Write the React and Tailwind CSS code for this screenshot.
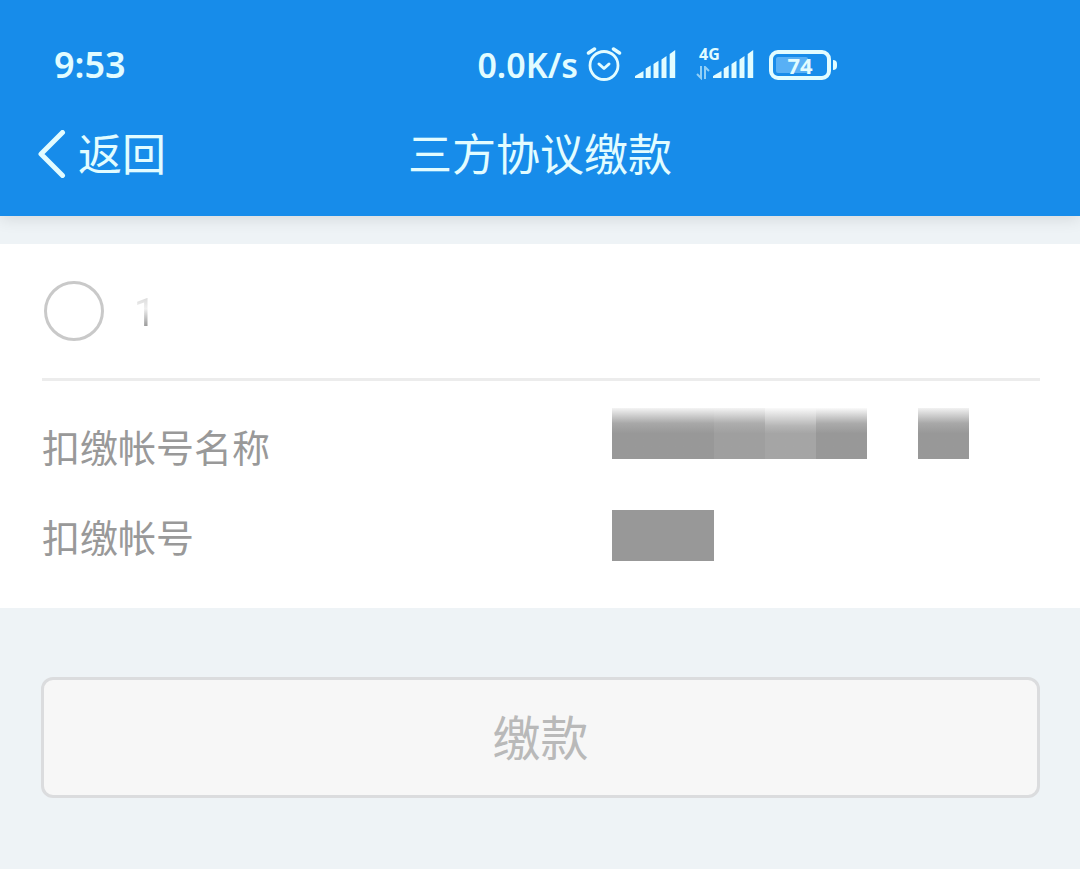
import { useState } from 'react';

// one entry per 51px mosaic cell, null leaves the cell empty
const nameBlocks = [
  'bg-linear-to-b from-[#f4f4f4] via-[#a8a8a8] via-30% to-[#989898] to-50%',
  'bg-linear-to-b from-[#f4f4f4] via-[#a8a8a8] via-30% to-[#989898] to-50%',
  'bg-linear-to-b from-[#f4f4f4] via-[#adadad] via-30% to-[#9f9f9f] to-50%',
  'bg-linear-to-b from-[#fafafa] via-[#b6b6b6] via-35% to-[#a5a5a5] to-50%',
  'bg-linear-to-b from-[#fafafa] via-[#ababab] via-30% to-[#989898] to-50%',
  null,
  'bg-linear-to-b from-[#f2f2f2] via-[#a8a8a8] via-30% to-[#989898] to-50%',
];
const accountBlocks = ['bg-[#989898]', 'bg-[#989898]'];

function AlarmIcon() {
  return (
    <svg width="36" height="36" viewBox="0 0 36 36" fill="none" stroke="currentColor" strokeLinecap="round" aria-hidden="true">
      <circle cx="18" cy="18.500" r="14" strokeWidth="2.8" />
      <path d="M13 17l5 4.500 5-4.500" strokeWidth="3" strokeLinejoin="round" />
      <path d="M2.500 6l6-4M33.500 6l-6-4" strokeWidth="3.5" />
    </svg>
  );
}

function SignalIcon() {
  return (
    <svg width="41" height="30" viewBox="0 0 41 30" fill="currentColor" aria-hidden="true">
      <path d="M0 28v-2l8.500-5v7zM10.700 28v-9.500l5-3V28zM18.500 28V14l5-3.200V28zM26.500 28V9.500l5-3.500v22zM34.700 28V4l5.500-4v28z" />
    </svg>
  );
}

function StatusBar() {
  return (
    <div className="flex items-center justify-between h-[130px] pl-[54px] pr-[243px] font-['Noto_Sans','Noto_Sans_CJK_SC',sans-serif] font-semibold text-[34px] leading-10">
      <span className="text-4xl">9:53</span>
      <div className="flex items-center">
        <span className="mr-2">0.0K/s</span>
        <AlarmIcon />
        <div className="ml-[13px]">
          <SignalIcon />
        </div>
        <div className="relative ml-5 pl-[17px]">
          <span className="absolute left-[3px] -top-1 text-base leading-4 font-bold">4G</span>
          <svg className="absolute left-0 bottom-0 opacity-60" width="14" height="14" viewBox="0 0 14 14" fill="none" stroke="currentColor" strokeWidth="2" aria-hidden="true">
            <path d="M5 0v12L1 8M9 13V1l4 4" />
          </svg>
          <SignalIcon />
        </div>
        <div className="flex items-center ml-[15px]">
          <div className="relative flex items-center justify-center w-[62px] h-[30px] border-4 border-current rounded-[9px] text-[22px] leading-5 font-bold">
            <div className="absolute left-[3px] inset-y-[3px] w-3/5 rounded-xs bg-[#58b0f5]"></div>
            <span className="relative">74</span>
          </div>
          <div className="ml-0.5 w-1 h-2.5 rounded-r-sm bg-current"></div>
        </div>
      </div>
    </div>
  );
}

function Mosaic({ blocks }) {
  return (
    <div className="flex h-[51px]">
      {blocks.map((block, idx) => (
        <div key={idx} className={`w-[51px] ${block || ''}`}></div>
      ))}
    </div>
  );
}

export default function App() {
  const [selected, setSelected] = useState(false);

  return (
    <div className="min-h-screen bg-[#eef3f6] font-['Noto_Sans_CJK_SC',sans-serif]">
      <header className="relative bg-[#178cea] text-[#e2fcff] shadow-[0_2px_16px_rgba(0,0,0,0.12)]">
        <StatusBar />
        <nav className="grid grid-cols-[1fr_auto_1fr] items-start h-[86px] px-[38px] text-[44px] leading-[44px]">
          <button type="button" className="flex items-start gap-3 justify-self-start">
            <svg width="28" height="48" viewBox="0 0 28 48" fill="none" stroke="currentColor" strokeWidth="5" strokeLinecap="round" strokeLinejoin="round" aria-hidden="true">
              <path d="M24.500 2.500L3 24l21.500 21.500" />
            </svg>
            返回
          </button>
          <h1>三方协议缴款</h1>
        </nav>
      </header>

      <main>
        <section className="mt-7 bg-white pl-[42px] pr-10 pb-[27px]">
          <label className="flex items-center gap-[30px] h-[137px] pl-0.5 border-b-3 border-[#ececec]">
            <input
              type="radio"
              name="agreement"
              className="appearance-none size-[60px] rounded-full border-3 border-[#c9c9c9] checked:border-[#178cea] checked:bg-[#178cea]"
              checked={selected}
              onChange={() => setSelected(true)}
            />
            <span className="pt-1 font-[Roboto,sans-serif] text-[38px] leading-10 bg-linear-to-b from-[#dcdcdc] from-20% via-[#efefef] via-45% to-[#9a9a9a] to-85% bg-clip-text text-transparent">
              1
            </span>
          </label>

          <div className="grid grid-cols-[4fr_3fr]">
            <div className="pt-5 text-[38px] leading-[90px] text-[#999999]">
              <p>扣缴帐号名称</p>
              <p>扣缴帐号</p>
            </div>
            <div className="flex flex-col gap-[51px] pt-[27px]">
              <Mosaic blocks={nameBlocks} />
              <Mosaic blocks={accountBlocks} />
            </div>
          </div>
        </section>

        <div className="pl-[41px] pr-10 pt-[69px]">
          <button
            type="button"
            disabled={!selected}
            className="w-full h-[121px] pb-1.5 rounded-xl border-3 border-[#dbdcde] bg-[#f7f7f7] text-5xl text-[#b9b9b9] enabled:bg-[#178cea] enabled:text-white"
          >
            缴款
          </button>
        </div>
      </main>
    </div>
  );
}
